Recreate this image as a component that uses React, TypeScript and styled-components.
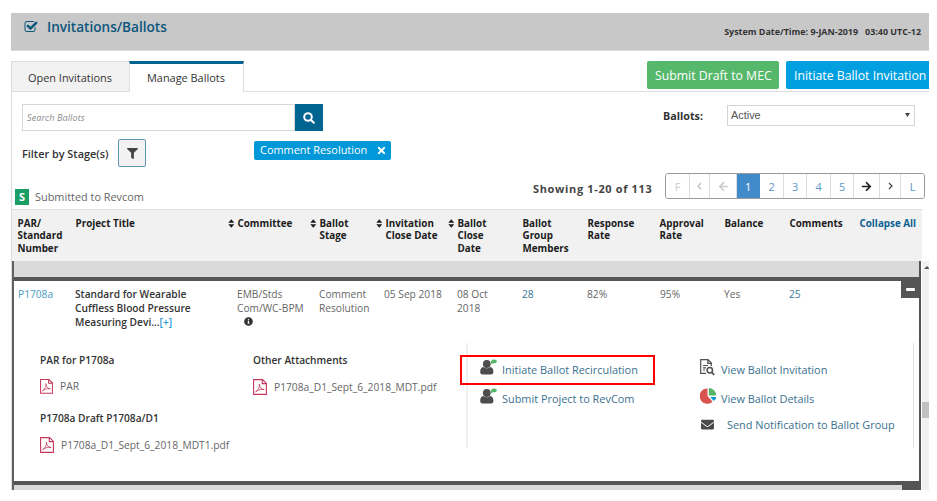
import React from 'react';
import styled, { createGlobalStyle } from 'styled-components';
import { FaFilter, FaTimes, FaInfoCircle, FaEnvelope, FaArrowLeft, FaArrowRight } from 'react-icons/fa';

const Global = createGlobalStyle`
  *, *::before, *::after { box-sizing: border-box; }
  body { margin: 0; background: #fff; font-family: "Open Sans", "Noto Sans", sans-serif; color: #333; }
  svg { display: block; flex: none; }
`;

const Page = styled.div`
  width: 918px;
  height: 477px;
  margin: 13px 0 0 11px;
  overflow: hidden;
  white-space: nowrap;
`;

/* ---------- top bar ---------- */
const TitleBar = styled.header`
  display: flex;
  justify-content: space-between;
  height: 38px;
  background: #c8c8c8;
  border-bottom: 1px solid #dcdcdc;
`;
const Title = styled.h1`
  display: flex;
  margin: 0;
  padding: 4px 0 0 13px;
  font-size: 13.6px;
  line-height: 20px;
  font-weight: 600;
  color: #0c567c;
  svg { width: 14px; height: 14px; margin: 3px 9px 0 0; }
`;
const Clock = styled.div`
  display: flex;
  gap: 7px;
  padding: 13px 8px 0 0;
  font-size: 8.93px;
  line-height: 12px;
  font-weight: 700;
  color: #333;
`;

/* ---------- tabs ---------- */
const TabBar = styled.nav`
  display: flex;
  height: 41px;
  padding-top: 10px;
  border-bottom: 1px solid #ddd;
`;
const Tab = styled.div<{ $active?: boolean }>`
  flex: none;
  width: ${p => (p.$active ? 115 : 118)}px;
  height: ${p => (p.$active ? 31 : 30)}px;
  padding-left: ${p => (p.$active ? 17 : 16)}px;
  border: 1px solid #ddd;
  border-width: ${p => (p.$active ? '3px 1px 0 1px' : '1px 0 0 1px')};
  border-top-color: ${p => (p.$active ? '#006390' : '#ddd')};
  background: ${p => (p.$active ? '#fff' : '#f2f2f2')};
  font-size: 10.93px;
  line-height: ${p => (p.$active ? 27 : 31)}px;
`;
const TabActions = styled.div`
  display: flex;
  gap: 7px;
  margin-left: 403px;
`;
const ActionButton = styled.button<{ $tone: string; $width: number }>`
  flex: none;
  width: ${p => p.$width}px;
  height: 28px;
  padding: 0 0 0 8px;
  border: 0;
  border-radius: 2px;
  background: ${p => p.$tone};
  color: #fff;
  font: 400 12.28px/29px "Open Sans", sans-serif;
  text-align: left;
`;

/* ---------- filters ---------- */
const Body = styled.main`
  height: 399px;
  border-left: 1px solid #ddd;
`;
const Filters = styled.section`
  display: flex;
  height: 93px;
  padding-left: 10px;
`;
const SearchSide = styled.div`
  width: 511px;
  padding-top: 12px;
`;
const SearchBox = styled.div`
  display: flex;
  width: 301px;
  height: 27px;
`;
const SearchField = styled.div`
  flex: 1;
  border: 1px solid #d8d8d8;
  padding-left: 4px;
  font-size: 8.98px;
  line-height: 25px;
  font-style: italic;
  letter-spacing: 0.12px;
  color: #888;
`;
const SearchButton = styled.button`
  display: flex;
  align-items: center;
  justify-content: center;
  width: 28px;
  padding: 0;
  border: 0;
  background: #006390;
`;
const StageRow = styled.div`
  display: flex;
  margin-top: 8px;
`;
const StageLabel = styled.div`
  width: 96px;
  font-size: 10.88px;
  line-height: 30px;
  font-weight: 600;
`;
const FilterButton = styled.button`
  display: flex;
  align-items: center;
  justify-content: center;
  width: 28px;
  height: 28px;
  padding: 0;
  border: 1px solid #5e96b4;
  border-radius: 2px;
  background: #f2f2f2;
  color: #444;
`;
const Chip = styled.div`
  display: flex;
  align-items: center;
  justify-content: space-between;
  width: 137px;
  height: 19px;
  margin: 2px 0 0 108px;
  padding: 0 4px 1px 6px;
  border-radius: 2px;
  background: #0098d8;
  color: #fff;
  font-size: 10.93px;
  line-height: 18px;
`;
const BallotSide = styled.div`
  display: flex;
  padding: 13px 0 0 130px;
`;
const BallotLabel = styled.label`
  width: 64px;
  font-size: 10.75px;
  line-height: 22px;
  font-weight: 700;
`;
const SelectBox = styled.div`
  display: flex;
  align-items: center;
  justify-content: space-between;
  width: 188px;
  height: 21px;
  padding: 0 4px 1px 3px;
  border: 1px solid #d4d4d4;
  font: 10.9px/19px "Liberation Sans", Arial, sans-serif;
  color: #555;
`;

/* ---------- legend and paging ---------- */
const Summary = styled.section`
  display: flex;
  height: 24px;
  padding-left: 3px;
`;
const Legend = styled.div`
  display: flex;
  width: 518px;
  padding-top: 3px;
  font-size: 10.9px;
  line-height: 18px;
  color: #666;
`;
const StatusBadge = styled.span`
  width: 14px;
  height: 16px;
  margin: 1px 6px 0 0;
  background: #1b9e66;
  color: #fff;
  font-size: 10.9px;
  line-height: 16px;
  font-weight: 700;
  text-align: center;
`;
const Showing = styled.div`
  width: 132px;
  font-size: 10.93px;
  line-height: 8px;
  font-weight: 700;
  letter-spacing: 0.68px;
  color: #444;
`;
const Pager = styled.div`
  display: flex;
  width: 260px;
  height: 26px;
  margin-top: -12px;
  border: 1px solid #999;
  border-radius: 3px;
  overflow: hidden;
`;
const PageCell = styled.div<{ $width: number; $tone?: string; $current?: boolean }>`
  display: flex;
  align-items: center;
  justify-content: center;
  flex: none;
  width: ${p => p.$width}px;
  border-right: 1px solid ${p => (p.$current ? '#428bca' : '#ddd')};
  background: ${p => (p.$current ? '#428bca' : '#fff')};
  color: ${p => (p.$current ? '#fff' : p.$tone || '#5d95c6')};
  font-size: 10.9px;
  &:last-child { border-right: 0; }
`;

/* ---------- table ---------- */
const HeadRow = styled.div`
  display: grid;
  grid-template-columns: 58px 152px 10px 72px 10px 56px 10px 62px 10px 65px 65px 72px 65px 65px 70px auto;
  width: 910px;
  height: 52px;
  padding: 7px 0 0 5.500px;
  border-top: 1px solid #ddd;
  background: #f1f1f1;
`;
const HeadCell = styled.div<{ $link?: boolean }>`
  white-space: pre-line;
  font-size: 9.85px;
  line-height: 12.3px;
  font-weight: 700;
  color: ${p => (p.$link ? '#0b5f90' : '#1c1c1c')};
`;
const SortMark = styled.svg`
  width: 7px;
  height: 9px;
  margin-top: 2px;
`;
const Scroller = styled.div`
  display: flex;
  height: 229px;
`;
const Rows = styled.div`
  width: 909px;
  border: 2px solid #555;
  border-left-color: #606060;
`;
const RowsFrame = styled(Rows)`
  border-width: 0 2px;
`;
const CollapsedRow = styled.div<{ $height: number; $inset?: boolean }>`
  height: ${p => p.$height}px;
  border-right: ${p => (p.$inset ? 17 : 0)}px solid #555;
  background: #dadada;
`;
const OpenRow = styled.article`
  height: 208px;
  border-top: 4px solid #555;
  border-bottom: 4px solid #555;
`;
const DataRow = styled.div`
  display: grid;
  grid-template-columns: 57px 162px 82px 65px 73px 65px 65px 73px 64px 65px 112px 18px;
  height: 62px;
  padding: 0 0 0 4px;
`;
const DataCell = styled.div<{ $tone?: string; $strong?: boolean }>`
  padding-top: 5.500px;
  white-space: pre-line;
  font-size: 10.2px;
  line-height: 14.3px;
  font-weight: ${p => (p.$strong ? 600 : 400)};
  color: ${p => p.$tone || (p.$strong ? '#333' : '#666')};
  svg { margin: 2px 0 0 7px; color: #333; }
`;
const MoreLink = styled.span`
  color: #1f9ad0;
`;
const CollapseButton = styled.button`
  width: 18px;
  height: 18px;
  margin-top: -1px;
  padding: 0;
  border: 0;
  background: #555;
  &::before {
    content: '';
    display: block;
    width: 9px;
    height: 3px;
    margin: 0 0 0 5px;
    background: #fff;
    border-radius: 1px;
  }
`;

/* ---------- expanded details ---------- */
const Details = styled.div`
  display: flex;
  height: 105px;
`;
const FileColumn = styled.div<{ $left: number; $width: number }>`
  width: ${p => p.$width}px;
  padding: 10px 0 0 ${p => p.$left}px;
`;
const FileHeading = styled.h2<{ $spaced?: boolean }>`
  margin: ${p => (p.$spaced ? 16 : 0)}px 0 0;
  font-size: 10.18px;
  line-height: 15px;
  font-weight: 600;
  color: #333;
`;
const FileLink = styled.div<{ $text: number }>`
  display: flex;
  gap: 7px;
  height: 16px;
  margin-top: 11px;
  font-size: 10.24px;
  line-height: ${p => p.$text}px;
  color: #666;
`;
const ActionColumns = styled.div`
  display: flex;
  width: 448px;
  border-left: 2px solid #f0f0f0;
  border-right: 1px solid #e2e2e2;
`;
const ActionColumn = styled.div<{ $width: number; $left: number }>`
  width: ${p => p.$width}px;
  padding: 12px 0 0 ${p => p.$left}px;
`;
const ActionLink = styled.div<{ $marked?: boolean; $tight?: boolean; $gap?: number }>`
  position: relative;
  display: flex;
  gap: ${p => p.$gap ?? 5}px;
  height: 29px;
  margin-top: ${p => (p.$tight ? -3 : 0)}px;
  padding-left: ${p => (p.$tight ? 1 : 0)}px;
  font-size: 10.92px;
  line-height: 29px;
  color: #3a718e;
  svg { margin-top: ${p => (p.$tight ? 8 : 4)}px; color: #4a4a4a; }
  &::after {
    content: '';
    display: ${p => (p.$marked ? 'block' : 'none')};
    position: absolute;
    left: -20px;
    top: 0;
    width: 195px;
    height: 30px;
    border: 2px solid #fe0000;
  }
`;
const Scrollbar = styled.div`
  width: 7px;
  margin-left: 1px;
  background: #f1f1f1;
`;
const ScrollArrow = styled.svg`
  width: 7px;
  height: 12px;
`;
const ScrollThumb = styled.div`
  height: 16px;
  margin-top: 129px;
  background: #c1c1c1;
`;

const CheckSquare = () => (
  <svg viewBox="0 0 1792 1792" fill="currentColor">
    <path d="M1472 930v318q0 119-84.5 203.5t-203.5 84.5h-832q-119 0-203.5-84.5t-84.5-203.5v-832q0-119 84.5-203.5t203.5-84.5h832q63 0 117 25 15 7 18 23 3 17-9 29l-49 49q-10 10-23 10-3 0-9-2-23-6-45-6h-832q-66 0-113 47t-47 113v832q0 66 47 113t113 47h832q66 0 113-47t47-113v-254q0-13 9-22l64-64q10-10 23-10 6 0 12 3 20 8 20 29zm231-489l-814 814q-24 24-57 24t-57-24l-430-430q-24-24-24-57t24-57l110-110q24-24 57-24t57 24l263 263 647-647q24-24 57-24t57 24l110 110q24 24 24 57t-24 57z" />
  </svg>
);
const Sort = () => (
  <SortMark viewBox="0 0 7 9"><path d="M.3 3.800L3.300.3l3 3.500ZM.3 5.300h6l-3 3.500Z" fill="#1c1c1c" /></SortMark>
);
const Magnifier = () => (
  <svg width="12" height="12" viewBox="0 0 12 12" fill="none" stroke="#fff" strokeWidth="2" strokeLinecap="round">
    <circle cx="5" cy="5" r="3.8" /><path d="M8 8l2.8 2.8" />
  </svg>
);
const Pdf = ({ size }: { size: number }) => (
  <svg width={size} height={size * 16 / 14} viewBox="0 0 14 16" fill="none" stroke="#c8355b" strokeWidth="1.1">
    <path d="M.6.6h9l3.800 3.800v11H.6ZM9.300.6v4h4.100" />
    <path d="M6.200 5c1 1.200-.1 4.800-3.600 8 1.500-2 5-3.100 8.600-2.400C8.800 10.400 6.600 8.500 6.200 5Z" strokeWidth=".8" />
  </svg>
);
const UserTalk = () => (
  <svg width="17" height="16" viewBox="0 0 17 16">
    <path d="M3.400 8C1.200 8.300.2 10 .2 12.800c0 1.700.8 2.600 2.200 2.600h8.800c1.400 0 2.200-.9 2.200-2.600 0-2.800-1-4.500-3.200-4.800C8.300 9.700 5.300 9.700 3.400 8Z" fill="#4d4d4d" />
    <circle cx="6.800" cy="5" r="3.900" fill="#4d4d4d" />
    <path d="M11 5.200C10.500 2.200 11.600.6 13.900.6c1.800 0 2.900.7 2.900 1.800S15.700 4.200 13.900 4.200c-.9 0-1.700.3-2.900 1Z" fill="#56b466" />
  </svg>
);
const DocSearch = () => (
  <svg width="15" height="17" viewBox="0 0 15 17" fill="none" stroke="#505050" strokeWidth="1.200">
    <path d="M6 14.400H.7V.7h7.300L11.300 4v3M7.800.8v3.500h3.400M3 6.500h5M3 8.800h3M3 11h2" />
    <circle cx="9.800" cy="11.300" r="2.700" strokeWidth="1.500" /><path d="M11.800 13.400l2.500 2.600" strokeWidth="1.700" />
  </svg>
);
const Pie = () => (
  <svg width="17" height="16" viewBox="0 0 17 16">
    <path d="M7.500 8V.4A7.700 7.700 0 1 0 12.600 13.700Z" fill="#d9534f" />
    <path d="M8.800 7.400V.1A7.400 7.400 0 0 1 16.100 7.400Z" fill="#56b466" />
    <path d="M10.200 8.900H16.200A6.500 6.500 0 0 1 13.900 13Z" fill="#0098d8" />
  </svg>
);
const Chevron = ({ back }: { back?: boolean }) => (
  <svg width="5" height="8" viewBox="0 0 5 8" fill="none" stroke="currentColor" strokeWidth="1.200">
    <path d={back ? 'M4 1L1 4l3 3' : 'M1 1l3 3-3 3'} />
  </svg>
);

export default function App() {
  return (
    <>
      <Global />
      <Page>
        <TitleBar>
          <Title><CheckSquare />Invitations/Ballots</Title>
          <Clock><span>System Date/Time: 9-JAN-2019</span><span>03:40 UTC-12</span></Clock>
        </TitleBar>
        <TabBar>
          <Tab>Open Invitations</Tab>
          <Tab $active>Manage Ballots</Tab>
          <TabActions>
            <ActionButton $tone="#55b86a" $width={132}>Submit Draft to MEC</ActionButton>
            <ActionButton $tone="#009fdf" $width={152}>Initiate Ballot Invitation</ActionButton>
          </TabActions>
        </TabBar>
        <Body>
          <Filters>
            <SearchSide>
              <SearchBox>
                <SearchField>Search Ballots</SearchField>
                <SearchButton><Magnifier /></SearchButton>
              </SearchBox>
              <StageRow>
                <StageLabel>Filter by Stage(s)</StageLabel>
                <FilterButton><FaFilter size={11} /></FilterButton>
                <Chip>Comment Resolution<FaTimes size={11} /></Chip>
              </StageRow>
            </SearchSide>
            <BallotSide>
              <BallotLabel>Ballots:</BallotLabel>
              <SelectBox>
                Active
                <svg width="5" height="4" viewBox="0 0 5 4"><path d="M0 0h5L2.500 4Z" fill="#444" /></svg>
              </SelectBox>
            </BallotSide>
          </Filters>
          <Summary>
            <Legend><StatusBadge>S</StatusBadge>Submitted to Revcom</Legend>
            <Showing>Showing 1-20 of 113</Showing>
            <Pager>
              <PageCell $width={24} $tone="#ccc">F</PageCell>
              <PageCell $width={20} $tone="#bbb"><Chevron back /></PageCell>
              <PageCell $width={27} $tone="#ccc"><FaArrowLeft size={11} /></PageCell>
              <PageCell $width={23} $current>1</PageCell>
              <PageCell $width={24}>2</PageCell>
              <PageCell $width={23}>3</PageCell>
              <PageCell $width={24}>4</PageCell>
              <PageCell $width={23}>5</PageCell>
              <PageCell $width={26} $tone="#222"><FaArrowRight size={11} /></PageCell>
              <PageCell $width={21} $tone="#444"><Chevron /></PageCell>
              <PageCell $width={23}>L</PageCell>
            </Pager>
          </Summary>
          <HeadRow>
            <HeadCell>{'PAR/\nStandard\nNumber'}</HeadCell>
            <HeadCell>Project Title</HeadCell>
            <Sort /><HeadCell>Committee</HeadCell>
            <Sort /><HeadCell>{'Ballot\nStage'}</HeadCell>
            <Sort /><HeadCell>{'Invitation\nClose Date'}</HeadCell>
            <Sort /><HeadCell>{'Ballot\nClose\nDate'}</HeadCell>
            <HeadCell>{'Ballot\nGroup\nMembers'}</HeadCell>
            <HeadCell>{'Response\nRate'}</HeadCell>
            <HeadCell>{'Approval\nRate'}</HeadCell>
            <HeadCell>Balance</HeadCell>
            <HeadCell>Comments</HeadCell>
            <HeadCell $link>Collapse All</HeadCell>
          </HeadRow>
          <Scroller>
            <RowsFrame>
              <CollapsedRow $height={16} />
              <OpenRow>
                <DataRow>
                  <DataCell $tone="#4a9cc4">P1708a</DataCell>
                  <DataCell $strong>{'Standard for Wearable\nCuffless Blood Pressure\nMeasuring Devi...'}<MoreLink>[+]</MoreLink></DataCell>
                  <DataCell>{'EMB/Stds\nCom/WC-BPM'}<FaInfoCircle size={9} /></DataCell>
                  <DataCell>{'Comment\nResolution'}</DataCell>
                  <DataCell>05 Sep 2018</DataCell>
                  <DataCell>{'08 Oct\n2018'}</DataCell>
                  <DataCell $tone="#3a7798">28</DataCell>
                  <DataCell>82%</DataCell>
                  <DataCell>95%</DataCell>
                  <DataCell>Yes</DataCell>
                  <DataCell $tone="#3a7798">25</DataCell>
                  <CollapseButton />
                </DataRow>
                <Details>
                  <FileColumn $left={26} $width={239}>
                    <FileHeading>PAR for P1708a</FileHeading>
                    <FileLink $text={14}><Pdf size={13} />PAR</FileLink>
                    <FileHeading $spaced>P1708a Draft P1708a/D1</FileHeading>
                    <FileLink $text={16}><Pdf size={14} />P1708a_D1_Sept_6_2018_MDT1.pdf</FileLink>
                  </FileColumn>
                  <FileColumn $left={0} $width={213}>
                    <FileHeading>Other Attachments</FileHeading>
                    <FileLink $text={16}><Pdf size={14} />P1708a_D1_Sept_6_2018_MDT.pdf</FileLink>
                  </FileColumn>
                  <ActionColumns>
                    <ActionColumn $width={219} $left={12}>
                      <ActionLink $marked><UserTalk /><span>Initiate Ballot Recirculation</span></ActionLink>
                      <ActionLink><UserTalk /><span>Submit Project to RevCom</span></ActionLink>
                    </ActionColumn>
                    <ActionColumn $width={226} $left={13}>
                      <ActionLink $gap={6}><DocSearch />View Ballot Invitation</ActionLink>
                      <ActionLink $gap={4}><Pie />View Ballot Details</ActionLink>
                      <ActionLink $gap={13} $tight><FaEnvelope size={13} />Send Notification to Ballot Group</ActionLink>
                    </ActionColumn>
                  </ActionColumns>
                </Details>
              </OpenRow>
              <CollapsedRow $height={5} $inset />
            </RowsFrame>
            <Scrollbar>
              <ScrollArrow viewBox="0 0 7 12"><path d="M2 8l3-3 3 3Z" fill="#555" /></ScrollArrow>
              <ScrollThumb />
            </Scrollbar>
          </Scroller>
        </Body>
      </Page>
    </>
  );
}
